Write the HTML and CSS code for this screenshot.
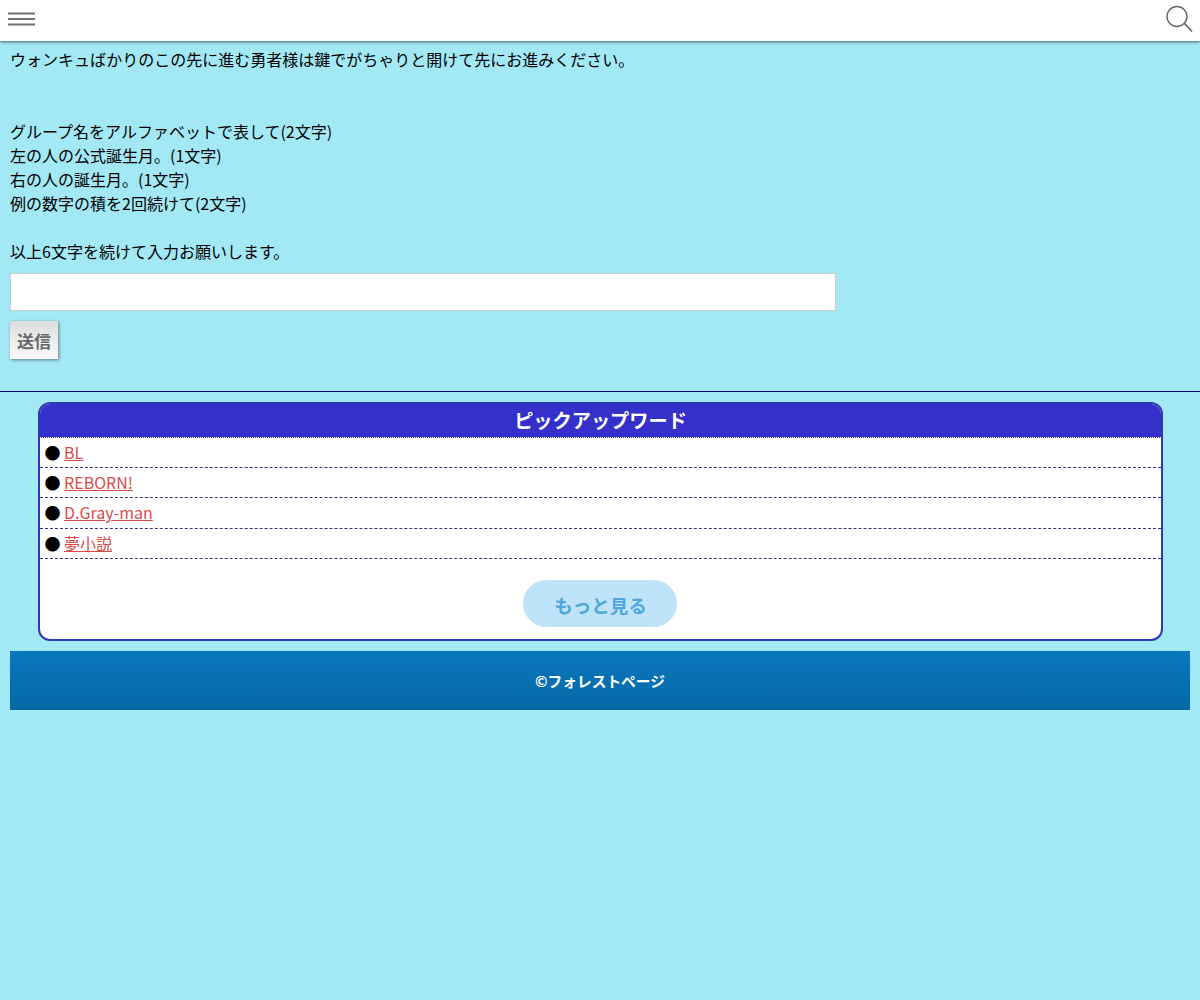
FILE: index.html
```html
<!DOCTYPE html>
<html lang="ja">
<head>
<meta charset="utf-8">
<title>パスワード</title>
<link rel="stylesheet" href="styles.css">
</head>
<body>
<header class="topbar">
  <svg class="menu-icon" width="28" height="14" viewBox="0 0 28 14" aria-hidden="true"><path d="M0 1.500H27M0 7H27M0 12.500H27" stroke="#707070" stroke-width="1.800" fill="none"/></svg>
  <svg class="search-icon" width="28" height="30" viewBox="0 0 28 30" aria-hidden="true"><circle cx="12" cy="12.500" r="10" stroke="#666" stroke-width="1.400" fill="none"/><path d="M19.500 19.500L27 27.500" stroke="#666" stroke-width="1.700" fill="none"/></svg>
</header>
<main class="content">
  <p class="line">ウォンキュばかりのこの先に進む勇者様は鍵でがちゃりと開けて先にお進みください。</p>
  <p class="line">&nbsp;</p>
  <p class="line">&nbsp;</p>
  <p class="line">グループ名をアルファベットで表して(2文字)</p>
  <p class="line">左の人の公式誕生月。(1文字)</p>
  <p class="line">右の人の誕生月。(1文字)</p>
  <p class="line">例の数字の積を2回続けて(2文字)</p>
  <p class="line">&nbsp;</p>
  <p class="line">以上6文字を続けて入力お願いします。</p>
  <form class="pass-form">
    <input class="pass-input" type="text" aria-label="パスワード">
    <button class="send" type="button">送信</button>
  </form>
</main>
<hr class="rule">
<section class="pickup">
  <h2 class="pickup-title">ピックアップワード</h2>
  <ul class="pickup-list">
    <li><span class="dot">●</span> <a href="#">BL</a></li>
    <li><span class="dot">●</span> <a href="#">REBORN!</a></li>
    <li><span class="dot">●</span> <a href="#">D.Gray-man</a></li>
    <li><span class="dot">●</span> <a href="#">夢小説</a></li>
  </ul>
  <div class="more-wrap"><a class="more" href="#">もっと見る</a></div>
</section>
<footer class="footer">©フォレストページ</footer>
</body>
</html>
```
FILE: styles.css
```css
* { box-sizing: border-box; }
html, body { margin: 0; padding: 0; }
body {
  background: #a3e8f5;
  color: #000;
  font-family: "Noto Sans CJK JP", "Noto Sans", sans-serif;
  font-size: 16px;
  line-height: 24px;
}
.topbar {
  height: 41px;
  background: #fff;
  box-shadow: 0 1px 3px rgba(0, 0, 0, 0.6);
  display: flex;
  align-items: center;
  justify-content: space-between;
  padding: 0 8px;
  position: relative;
}
.menu-icon { display: block; margin-top: -3px; }
.search-icon { display: block; margin-right: -1px; margin-top: -3px; }
.content { padding: 6px 10px 0; }
.line { margin: 0; height: 24px; }
.pass-form { display: flex; flex-direction: column; align-items: flex-start; }
.pass-input {
  display: block;
  width: 826px;
  height: 38px;
  margin-top: 10px;
  background: #fff;
  border: 1px solid #ccc;
  padding: 0 8px;
}
.send {
  display: block;
  width: 48px;
  height: 38px;
  margin-top: 10px;
  padding: 1px 0 0;
  border: 0;
  background: linear-gradient(#dcdcdc, #fbfbfb);
  box-shadow: 1px 1px 3px rgba(0, 0, 0, 0.45);
  color: #666;
  font: bold 17px/36px "Noto Sans CJK JP", sans-serif;
}
.rule {
  margin: 32px 0 0;
  border: 0;
  height: 1px;
  background: #000090;
}
.pickup {
  margin: 10px 37px 0 38px;
  background: #fff;
  border: 2px solid #3238b4;
  border-radius: 12px;
  overflow: hidden;
}
.pickup-title {
  margin: 0;
  height: 34px;
  background: #3430c9;
  color: #fff;
  font-size: 19.200px;
  line-height: 33px;
  font-weight: bold;
  text-align: center;
  border-bottom: 1px dotted #fff;
}
.pickup-list { list-style: none; margin: 0; padding: 0; }
.pickup-list li {
  height: 30.200px;
  padding-left: 4.500px;
  line-height: 28px;
  border-bottom: 1px dashed #3b2f7a;
}
.dot { color: #000; }
.pickup-list a { color: #d94a4a; }
.more-wrap { display: flex; justify-content: center; padding: 21.200px 0 12px; }
.more {
  display: block;
  width: 154px;
  height: 47px;
  margin-right: 1px;
  border-radius: 24px;
  background: #bfe3f8;
  color: #4fa6da;
  font-size: 18.560px;
  font-weight: bold;
  line-height: 49px;
  text-align: center;
  text-indent: 1px;
  text-decoration: none;
}
.footer {
  margin: 10px 10px 0;
  height: 59px;
  background: linear-gradient(#0a78bd, #0568a6);
  color: #fff;
  font-size: 14.720px;
  font-weight: bold;
  line-height: 60px;
  text-align: center;
}
```
